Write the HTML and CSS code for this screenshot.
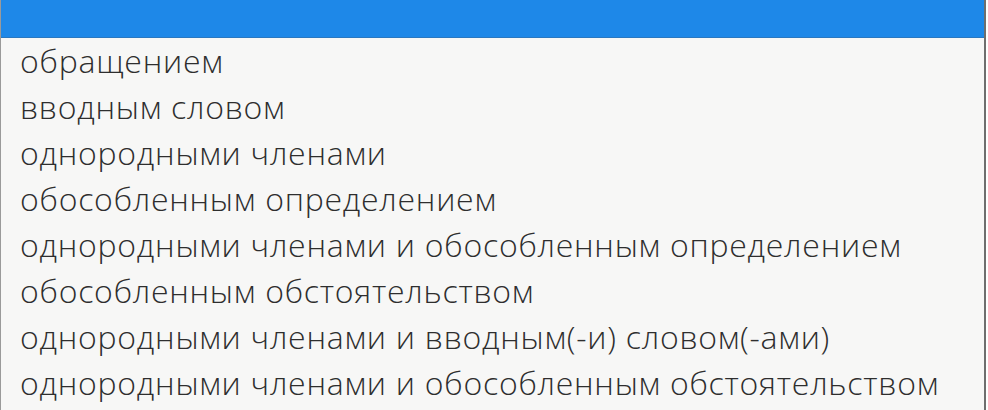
FILE: index.html
```html
<!DOCTYPE html>
<html lang="ru">
<head>
<meta charset="utf-8">
<link rel="stylesheet" href="styles.css">
</head>
<body>
<div class="dropdown">
  <div class="header"></div>
  <ul class="options">
    <li>обращением</li>
    <li>вводным словом</li>
    <li>однородными членами</li>
    <li>обособленным определением</li>
    <li>однородными членами и обособленным определением</li>
    <li>обособленным обстоятельством</li>
    <li>однородными членами и вводным(-и) словом(-ами)</li>
    <li>однородными членами и обособленным обстоятельством</li>
  </ul>
</div>
</body>
</html>
```
FILE: styles.css
```css
html, body {
  margin: 0;
  padding: 0;
  background: #ffffff;
}
.dropdown {
  width: 983px;
  height: 410px;
  border-left: 1px solid #9a9a9a;
  border-right: 2px solid #6e6e6e;
  background: #f7f7f6;
  overflow: hidden;
  box-sizing: content-box;
}
.header {
  height: 38px;
  background: #1e88e8;
  border-bottom: 1px solid #2a78c0;
  box-sizing: border-box;
}
.options {
  list-style: none;
  margin: 0;
  padding: 0 0 0 19px;
  font-family: "Open Sans", sans-serif;
  font-size: 32px;
  font-weight: 350;
  line-height: 46px;
  letter-spacing: 0.75px;
  color: #2e2e2e;
}
.options li {
  white-space: nowrap;
}
```
